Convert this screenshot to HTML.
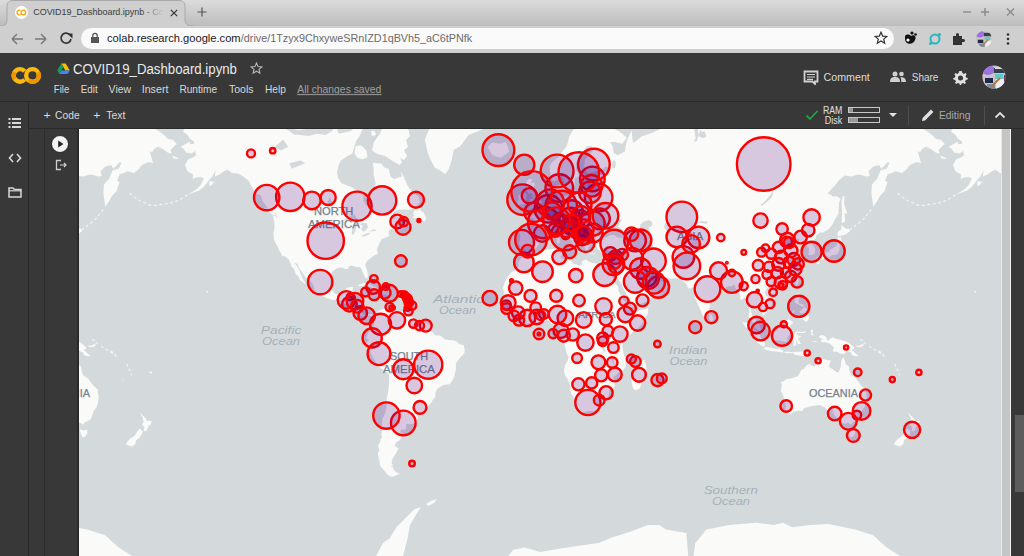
<!DOCTYPE html>
<html><head><meta charset="utf-8">
<style>
*{margin:0;padding:0;box-sizing:border-box}
html,body{width:1024px;height:556px;overflow:hidden;background:#383838;font-family:"Liberation Sans",sans-serif}
.abs{position:absolute}
#strip{left:0;top:0;width:1024px;height:26px;background:linear-gradient(#dcdcdc,#bcbcbc)}
#tab{left:0;top:0;width:200px;height:27px}
#toolbar{left:0;top:26px;width:1024px;height:27px;background:#cfcfcf}
#url{left:81px;top:28px;width:813px;height:21px;border-radius:11px;background:#fafafa}
.t{position:absolute;white-space:nowrap}
#hdr{left:0;top:53px;width:1024px;height:48px;background:#383838}
#hline{left:0;top:101px;width:1024px;height:1px;background:#282828}
#tb2{left:0;top:102px;width:1024px;height:26px;background:#383838}
#tline{left:28px;top:128px;width:996px;height:1px;background:#2a2a2a}
#side{left:0;top:102px;width:28px;height:454px;background:#383838}
#sline{left:28px;top:102px;width:1px;height:454px;background:#2a2a2a}
#cline{left:44px;top:129px;width:1px;height:427px;background:#2c2c2c}
#map{left:79px;top:129px;width:922px;height:427px;overflow:hidden;background:#d4dadc}
#rstrip{left:1001px;top:129px;width:10px;height:427px;background:#c5c5c5}
#rline{left:1010px;top:129px;width:1px;height:427px;background:#f0f0f0}
#thumb{left:1015px;top:415px;width:9px;height:77px;background:#5c5c5c}
.w{color:#e8eaed}
</style></head><body>
<div id="strip" class="abs"></div>
<svg class="abs" style="left:0;top:0" width="200" height="27">
 <path d="M0,26 C6,26 7,24 7,18 L7,7 C7,2 9,0.5 14,0.5 L178,0.5 C183,0.5 185,2 185,7 L185,18 C185,24 187,26 193,26" fill="#cfcfcf" stroke="#a8a8a8" stroke-width="1"/>
</svg>
<div class="abs" style="left:15px;top:6px;width:13px;height:13px;border-radius:50%;background:#fff"></div>
<svg class="abs" style="left:15px;top:6px" width="13" height="13"><path d="M5.6,4.4A2.4,2.4 0 1 0 5.6,8.6" fill="none" stroke="#f5a000" stroke-width="1.3"/><circle cx="8.4" cy="6.5" r="2.3" fill="none" stroke="#f5a000" stroke-width="1.3"/></svg>
<svg class="abs" style="left:169px;top:8px" width="10" height="10"><path d="M1.8,1.8L8.2,8.2M8.2,1.8L1.8,8.2" stroke="#333" stroke-width="1.2"/></svg>
<svg class="abs" style="left:196px;top:6px" width="12" height="12"><path d="M6,1.5V10.5M1.5,6H10.5" stroke="#555" stroke-width="1.2"/></svg>
<svg class="abs" style="left:960px;top:6px" width="64" height="12"><path d="M3,6H11" stroke="#8a8a8a" stroke-width="1.4"/><path d="M25,2V10M21,6H29" stroke="#8a8a8a" stroke-width="1.4"/><path d="M47,2.5L54,9.5M54,2.5L47,9.5" stroke="#8a8a8a" stroke-width="1.4"/></svg>
<div id="toolbar" class="abs"></div>
<svg class="abs" style="left:8px;top:31px" width="70" height="16">
 <path d="M4,8H15M4,8L9,3M4,8L9,13" stroke="#7a7a7a" stroke-width="1.5" fill="none"/>
 <path d="M27,8H38M38,8L33,3M38,8L33,13" stroke="#7a7a7a" stroke-width="1.5" fill="none"/>
 <path d="M61.5,3.5A5,5 0 1 0 63,8" stroke="#333" stroke-width="1.7" fill="none"/><path d="M59,2.5L64.5,2.5L64.5,7.5Z" fill="#333"/>
</svg>
<div id="url" class="abs"></div>
<svg class="abs" style="left:90px;top:32px" width="10" height="12"><rect x="1" y="5" width="8" height="6" fill="#555"/><path d="M2.8,5V3.5A2.2,2.2 0 0 1 7.2,3.5V5" stroke="#555" stroke-width="1.3" fill="none"/></svg>
<svg class="abs" style="left:874px;top:31px" width="14" height="14"><path d="M7,1.2L8.7,5.1L12.8,5.4L9.7,8.1L10.7,12.2L7,10L3.3,12.2L4.3,8.1L1.2,5.4L5.3,5.1Z" fill="none" stroke="#333" stroke-width="1.2"/></svg>
<svg class="abs" style="left:902px;top:30px" width="120" height="18">
 <path d="M3,7C3,4 7,4 9,6C12,4 15,7 13,10C12,14 6,15 4,12C3,11 3,9 3,7Z" fill="#111"/><circle cx="10" cy="3" r="1.6" fill="#111"/><circle cx="13.5" cy="4.5" r="1.3" fill="#111"/><circle cx="6" cy="10" r="1.6" fill="#fff"/>
 <circle cx="33" cy="9" r="4.5" fill="none" stroke="#2bb5c0" stroke-width="2"/><circle cx="37.5" cy="4.5" r="1.5" fill="#2bb5c0"/><circle cx="28.5" cy="13.5" r="1.5" fill="#2bb5c0"/>
 <path d="M51,6H54V4.5A1.5,1.5 0 0 1 57,4.5V6H60V9H61.5A1.5,1.5 0 0 1 61.5,12H60V15H51Z" fill="#333"/>
 <defs><clipPath id="av2"><circle cx="13" cy="12" r="11.6"/></clipPath></defs><g transform="translate(82,9) scale(0.69) translate(-13,-12)" clip-path="url(#av2)"><rect width="26" height="26" fill="#cdc3c6"/><ellipse cx="7" cy="5" rx="7" ry="5" fill="#9b72e0"/><rect x="4" y="13" width="8" height="5" fill="#1d2b48"/><rect x="6" y="19" width="8" height="7" fill="#7090a8"/><rect x="15" y="14" width="9" height="12" fill="#eeeeee"/><rect x="13" y="3" width="11" height="5" fill="#33404e"/><rect x="14" y="9" width="8" height="5" fill="#5fc9c8"/><path d="M9,23L19,13" stroke="#b07a4a" stroke-width="2"/></g>
 <circle cx="106" cy="4.5" r="1.3" fill="#333"/><circle cx="106" cy="9" r="1.3" fill="#333"/><circle cx="106" cy="13.5" r="1.3" fill="#333"/>
</svg>
<div id="hdr" class="abs"></div>
<svg class="abs" style="left:0;top:52px" width="50" height="50"><path d="M24.68,19.18 A6.30,6.30 0 1 0 24.68,27.62" stroke="#fbb912" stroke-width="4.4" fill="none"/><path d="M14.66,20.06 A6.30,6.30 0 0 0 14.84,27.01" stroke="#f09400" stroke-width="4.4" fill="none"/><circle cx="32.5" cy="23.4" r="6.3" stroke="#fbb912" stroke-width="4.4" fill="none"/><path d="M37.84,20.06 A6.30,6.30 0 0 1 28.62,28.36" stroke="#f09400" stroke-width="4.4" fill="none"/></svg>
<svg class="abs" style="left:57px;top:63px" width="13" height="11"><path d="M4.3,0.5H8.7L12.8,7.5H8.4Z" fill="#fbbc04"/><path d="M4.3,0.5L0.2,7.5L2.4,11L6.5,4Z" fill="#0f9d58"/><path d="M2.4,11H10.6L12.8,7.5H4.6Z" fill="#4285f4"/></svg>
<svg class="abs" style="left:250px;top:62px" width="13" height="13"><path d="M6.5,1L8,4.6L11.9,4.9L9,7.4L9.9,11.2L6.5,9.2L3.1,11.2L4,7.4L1.1,4.9L5,4.6Z" fill="none" stroke="#b8b8b8" stroke-width="1.1"/></svg>
<svg class="abs" style="left:803px;top:70px" width="16" height="15"><path d="M1.5,1.5H14.5V11.5H12V14L9.5,11.5H1.5Z" fill="none" stroke="#d0d0d0" stroke-width="1.8"/><path d="M4,4.5H12M4,7H12M4,9.3H10" stroke="#d0d0d0" stroke-width="1.2"/></svg>
<svg class="abs" style="left:890px;top:71px" width="16" height="12"><circle cx="5" cy="3" r="2.5" fill="#d0d0d0"/><circle cx="11.5" cy="3" r="2.3" fill="#d0d0d0"/><path d="M0,11C0,7 2,6 5,6C8,6 10,7 10,11Z" fill="#d0d0d0"/><path d="M10.5,6.2C13.5,6 16,7 16,11H11.3C11.3,9 11,7.5 10.5,6.2Z" fill="#d0d0d0"/></svg>
<svg class="abs" style="left:953px;top:70px" width="15" height="15"><path d="M7.5,1L9,1.3L9.3,3.1L10.8,3.9L12.4,2.9L13.6,4.3L12.6,5.9L13,7.5L14.8,8L14.6,9.5L12.8,9.9L12.1,11.4L13,13L11.7,14.1L10.2,13.1L8.6,13.6L8.2,15H6.8L6.4,13.6L4.8,13.1L3.3,14.1L2,13L2.9,11.4L2.2,9.9L0.4,9.5L0.2,8L2,7.5L2.4,5.9L1.4,4.3L2.6,2.9L4.2,3.9L5.7,3.1L6,1.3Z" fill="#e0e0e0"/><circle cx="7.5" cy="8" r="2.5" fill="#383838"/></svg>
<svg class="abs" style="left:981px;top:65px" width="26" height="26"><defs><clipPath id="av"><circle cx="13" cy="12" r="11.6"/></clipPath></defs><g clip-path="url(#av)"><rect width="26" height="26" fill="#cdc3c6"/><ellipse cx="7" cy="5" rx="7" ry="5" fill="#9b72e0"/><rect x="4" y="13" width="8" height="5" fill="#1d2b48"/><rect x="6" y="19" width="8" height="7" fill="#7090a8"/><rect x="15" y="14" width="9" height="12" fill="#eeeeee"/><rect x="13" y="3" width="11" height="5" fill="#33404e"/><rect x="14" y="2.5" width="9" height="1.5" fill="#e0e0e0"/><rect x="14" y="9" width="8" height="5" fill="#5fc9c8"/><path d="M9,23L19,13" stroke="#b07a4a" stroke-width="2"/><rect x="23" y="10" width="3" height="8" fill="#6a3050"/></g></svg>
<div id="hline" class="abs"></div>
<div id="tb2" class="abs"></div>
<svg class="abs" style="left:805px;top:109px" width="14" height="12"><path d="M1.5,6.5L5,10L12.5,2" stroke="#1ea446" stroke-width="1.8" fill="none"/></svg>
<div class="abs" style="left:848px;top:107px;width:32px;height:6px;border:1px solid #c8c8c8;background:#383838"><div style="width:4px;height:4px;background:#999"></div></div>
<div class="abs" style="left:848px;top:117px;width:32px;height:6px;border:1px solid #c8c8c8;background:#383838"><div style="width:9px;height:4px;background:#999"></div></div>
<svg class="abs" style="left:888px;top:112px" width="10" height="6"><path d="M1,1H9L5,5Z" fill="#e0e0e0"/></svg>
<div class="abs" style="left:908px;top:106px;width:1px;height:19px;background:#4e4e4e"></div>
<svg class="abs" style="left:921px;top:108px" width="14" height="14"><path d="M1,13L1.6,10L10,1.6L12.4,4L4,12.4Z" fill="#e0e0e0"/></svg>
<div class="abs" style="left:984px;top:106px;width:1px;height:19px;background:#4e4e4e"></div>
<svg class="abs" style="left:994px;top:111px" width="12" height="8"><path d="M1.5,6.5L6,2L10.5,6.5" stroke="#e0e0e0" stroke-width="1.8" fill="none"/></svg>
<div id="side" class="abs"></div>
<svg class="abs" style="left:8px;top:117px" width="14" height="12"><g fill="#d8d8d8"><rect x="0.5" y="1" width="2" height="2"/><rect x="4" y="1" width="9" height="2"/><rect x="0.5" y="5" width="2" height="2"/><rect x="4" y="5" width="9" height="2"/><rect x="0.5" y="9" width="2" height="2"/><rect x="4" y="9" width="9" height="2"/></g></svg>
<svg class="abs" style="left:8px;top:152px" width="14" height="12"><path d="M5,2L1.5,6L5,10M9,2L12.5,6L9,10" stroke="#d8d8d8" stroke-width="1.6" fill="none"/></svg>
<svg class="abs" style="left:8px;top:186px" width="14" height="12"><path d="M1,2H5L6.5,3.5H13V11H1Z" fill="none" stroke="#d8d8d8" stroke-width="1.5"/><path d="M1,4.8H13" stroke="#d8d8d8" stroke-width="1.2"/></svg>
<div id="sline" class="abs"></div>
<div id="tline" class="abs"></div>
<div id="cline" class="abs"></div>
<div class="abs" style="left:51px;top:135px;width:18px;height:18px;border-radius:50%;background:#f4f4f4;border:1px solid #2a2a2a"></div>
<svg class="abs" style="left:52px;top:136px" width="16" height="16"><path d="M6.2,4.6L11.4,8L6.2,11.4Z" fill="#222"/></svg>
<svg class="abs" style="left:55px;top:159px" width="13" height="12"><path d="M6,1.5H1.5V10.5H6" stroke="#cfcfcf" stroke-width="1.3" fill="none"/><path d="M5,6H11M9,4L11,6L9,8" stroke="#cfcfcf" stroke-width="1.2" fill="none"/></svg>
<div class="abs" style="left:77px;top:129px;width:2px;height:427px;background:#2a2a2a"></div>
<div id="map" class="abs">
<svg width="922" height="427" viewBox="79 129 922 427" style="display:block">
 <defs><g id="world"><path d="M180.6,94.2 184.4,128.6 183.2,131.8 188.1,135.5 189.8,138.8 193.4,141.0 194.5,143.7 189.8,144.2 190.0,141.5 185.9,143.7 180.4,146.8 183.8,148.9 186.1,152.4 191.7,153.4 195.1,150.9 196.0,155.3 193.4,157.2 188.1,159.6 184.9,165.1 187.0,170.4 190.2,173.0 192.8,173.9 193.0,178.9 196.6,177.2 200.9,177.2 204.1,178.5 200.4,185.3 196.6,189.2 191.7,192.2 187.4,194.8 193.4,192.5 198.7,190.7 204.1,186.8 206.2,183.7 210.0,178.9 212.6,176.0 215.4,170.0 214.9,176.4 219.0,174.7 224.3,171.3 227.5,169.6 231.8,173.0 238.2,173.5 241.0,175.1 245.7,178.5 248.9,181.3 251.0,185.3 254.2,191.0 257.4,194.0 261.0,195.5 262.7,201.2 265.9,205.4 267.6,208.1 271.1,210.5 276.2,213.7 276.6,216.0 277.7,219.2 276.0,216.6 273.0,216.0 274.3,222.3 274.3,229.3 273.4,232.8 274.0,239.4 274.9,242.1 277.7,246.8 278.9,250.0 280.9,252.9 281.7,255.5 284.7,256.5 286.4,257.3 289.0,260.1 290.5,263.1 291.5,266.4 293.7,268.6 295.2,271.7 295.6,273.7 299.0,277.0 299.6,279.4 303.3,282.4 304.5,283.8 305.6,282.9 303.5,280.5 301.8,276.8 299.4,270.5 296.9,265.9 294.1,262.6 297.5,263.9 299.0,268.1 302.2,272.2 305.8,277.7 308.6,278.9 312.0,283.1 313.9,286.3 314.4,289.8 316.5,292.7 319.3,294.5 322.5,296.3 325.9,297.6 329.9,299.2 334.2,300.1 337.0,299.0 340.6,300.5 342.7,302.7 345.9,304.1 349.1,305.1 351.9,305.6 353.0,307.1 355.5,310.0 356.2,310.8 356.0,312.6 358.3,313.4 360.4,315.8 362.4,316.4 365.1,317.7 367.9,318.4 367.5,316.2 369.4,315.2 371.5,316.2 372.8,318.6 373.9,315.6 373.7,314.9 371.5,313.9 368.5,313.9 365.8,315.2 363.6,314.3 360.7,311.5 360.4,309.3 360.9,306.9 361.3,303.4 361.5,301.6 358.7,299.6 355.5,299.6 352.3,299.9 350.8,300.1 350.6,296.1 351.7,293.8 352.5,289.8 353.4,287.0 350.8,287.0 346.4,287.9 345.9,290.9 343.8,293.8 340.6,294.1 337.4,294.5 334.8,293.4 333.1,291.3 331.6,288.8 330.6,285.9 330.4,281.2 331.0,277.0 331.4,272.9 333.1,270.8 336.8,268.6 339.5,267.6 342.7,267.8 345.9,269.1 348.7,269.1 348.3,266.9 351.3,265.6 353.4,266.1 356.6,267.1 359.2,266.9 361.3,268.6 362.6,272.2 364.5,276.3 366.2,278.4 367.5,278.4 368.1,275.3 367.1,270.5 365.3,265.6 365.8,262.9 367.3,261.1 370.5,258.3 373.0,256.3 375.8,254.7 377.9,253.7 377.1,249.7 376.2,246.5 377.1,248.7 378.6,245.2 379.0,244.1 380.1,242.4 381.1,239.4 382.2,238.8 385.4,237.9 387.5,236.5 389.7,236.0 388.4,233.4 389.2,230.1 392.9,228.4 396.1,226.9 397.8,227.8 399.3,230.7 402.5,227.5 407.8,225.7 411.0,223.8 409.9,220.1 408.0,223.2 404.6,224.1 401.2,222.3 400.3,218.6 402.0,214.4 399.3,213.1 396.1,213.4 391.8,216.3 393.9,212.1 398.2,209.8 404.6,209.5 411.0,209.8 417.0,205.7 420.0,201.9 418.5,196.6 414.2,193.7 410.6,189.9 407.4,185.3 405.7,181.3 401.4,171.7 397.1,177.2 393.9,179.3 390.5,176.4 388.6,168.7 384.3,167.4 381.1,163.3 372.6,162.4 373.7,168.7 373.7,175.1 375.6,182.9 374.7,189.2 370.7,194.8 370.5,201.9 369.4,205.4 366.8,206.1 363.4,200.5 363.4,192.9 357.7,191.8 351.3,186.1 345.9,184.5 341.7,183.3 338.0,178.1 337.2,170.9 339.5,165.1 344.9,160.1 346.4,156.8 352.3,153.4 355.1,143.7 357.7,142.1 365.1,138.3 365.8,130.3 364.1,125.0 357.7,123.1 351.3,130.9 347.0,132.1 338.5,133.8 336.3,125.0 332.1,130.9 325.7,134.9 317.1,133.8 308.6,136.1 300.1,134.9 293.7,134.4 289.4,130.9 280.9,126.2 274.5,123.1 265.9,123.7 257.4,125.0 251.0,128.0 240.3,124.3 219.0,119.4 206.2,113.5 193.4,118.7 180.6,94.2ZM383.3,108.8 421.7,118.7 423.8,126.2 430.2,126.8 424.9,139.4 425.9,144.7 428.1,153.8 431.3,161.0 434.9,167.8 438.7,169.6 445.1,173.9 448.3,170.0 451.5,161.0 453.7,149.9 460.1,146.3 468.6,134.9 485.7,128.0 492.1,115.5 496.3,86.2ZM412.3,218.2 414.2,215.4 413.1,213.1 416.3,207.8 420.4,205.1 420.6,210.8 423.8,212.4 424.9,215.4 426.4,218.2 424.7,221.4 421.7,220.1 418.5,218.2ZM287.3,126.8 297.9,130.3 312.9,128.0 323.5,125.0 332.1,123.1 334.2,108.8 283.0,108.8ZM155.0,148.3 158.2,146.8 163.5,149.4 166.9,151.9 169.9,153.4 171.6,152.9 170.4,149.9 173.6,146.8 175.1,145.2 177.0,144.2 173.1,139.9 167.8,138.8 164.6,135.5 159.3,131.5 155.0,128.6 155.0,108.8ZM172.5,155.8 179.1,158.2 176.8,159.1 173.1,158.2ZM209.4,181.3 214.3,181.7 211.5,185.3 209.2,186.1ZM265.1,207.8 272.3,209.8 276.0,215.7 272.8,215.0 268.7,211.8ZM357.7,286.1 359.8,284.3 364.1,283.1 368.3,283.3 373.7,286.3 377.9,288.2 380.7,290.0 374.3,290.7 373.7,288.8 368.3,286.3 364.5,285.4 361.3,286.3ZM380.1,294.1 383.7,290.7 389.7,291.1 393.3,293.6 387.1,295.8 384.3,294.5ZM372.0,294.3 376.4,295.0 374.3,295.6ZM395.6,293.8 399.1,294.1 398.6,295.0 395.6,295.0ZM373.0,274.4 374.7,275.3 374.1,278.9 372.6,278.2ZM373.9,315.6 376.4,314.1 377.9,311.7 379.4,310.4 380.7,309.7 383.7,309.1 385.6,307.3 386.9,308.6 385.6,310.0 386.3,310.8 387.5,310.0 389.2,309.5 389.7,308.0 391.2,309.3 393.5,311.5 396.1,311.3 400.3,312.3 402.5,311.3 406.3,311.0 407.2,312.1 409.3,315.8 411.4,316.2 414.8,319.5 417.0,321.2 421.7,321.4 424.9,322.0 427.4,323.5 429.8,325.2 431.1,329.7 432.3,331.9 433.8,334.2 436.0,335.7 438.7,335.3 441.9,336.8 444.5,339.3 448.3,340.0 451.5,340.2 454.7,340.4 456.9,341.9 459.6,344.3 463.3,344.9 463.9,346.0 464.8,350.0 464.3,353.3 462.8,354.8 460.1,357.6 457.3,361.5 455.8,363.3 456.0,368.6 455.2,372.6 454.1,376.7 452.6,379.8 451.5,382.1 449.4,384.2 446.8,384.4 443.6,385.1 440.2,386.8 437.0,389.1 435.5,392.7 435.3,396.7 433.0,399.4 430.6,403.6 427.9,406.4 425.9,409.2 424.9,410.7 421.9,413.5 419.1,413.5 416.3,412.2 414.4,412.0 416.5,415.1 418.0,417.5 416.3,421.8 413.1,423.7 408.9,424.2 406.1,423.9 406.3,427.8 404.8,430.1 401.4,429.5 400.3,431.8 402.5,433.8 403.3,435.2 401.6,435.5 399.9,440.2 397.1,441.7 395.0,444.5 395.0,446.3 398.6,448.5 396.1,453.0 394.4,455.9 392.4,458.9 391.6,462.9 393.1,465.4 389.7,466.4 392.7,466.8 393.3,468.9 395.0,471.4 399.9,474.0 396.9,475.1 393.7,476.6 390.7,476.6 387.1,474.3 383.7,470.0 380.1,465.7 379.4,460.9 377.9,453.3 379.4,450.1 377.9,446.3 379.9,442.3 381.1,438.7 382.2,437.0 381.1,434.6 382.0,432.3 381.3,427.8 382.2,423.1 382.2,419.6 384.1,415.4 385.6,411.2 386.5,407.4 386.5,402.4 386.9,397.5 388.2,391.5 388.8,385.8 389.2,379.8 389.0,373.9 386.7,372.2 383.3,369.7 379.0,367.0 376.4,363.9 374.5,359.8 372.2,355.9 370.5,351.6 368.5,348.5 366.0,346.6 365.8,343.8 367.7,341.3 368.8,339.5 366.4,338.7 367.5,335.1 368.3,332.3 370.5,330.4 371.5,328.7 373.7,325.9 374.1,322.2 373.7,319.7 372.8,318.6ZM526.4,252.1 527.9,251.8 530.5,253.7 534.3,253.9 536.4,252.4 539.2,251.8 542.2,250.3 545.4,249.5 549.7,249.5 552.9,248.9 556.1,249.2 559.9,248.1 562.5,248.7 561.4,250.5 561.6,252.6 562.7,253.7 561.4,255.8 560.3,257.0 562.7,258.8 565.7,259.9 567.2,259.6 571.4,261.1 572.7,263.4 576.3,264.6 579.3,266.1 581.9,264.4 581.7,261.6 583.4,260.4 585.9,259.6 588.7,261.4 592.3,262.9 596.6,263.6 600.9,264.6 603.0,263.6 605.3,262.9 607.9,263.6 612.0,263.6 613.5,268.1 612.2,272.2 610.5,270.5 608.5,267.1 607.9,268.1 610.7,273.7 612.2,277.0 614.7,281.5 615.2,283.8 617.7,285.9 618.4,288.2 618.4,291.3 620.5,294.5 621.3,295.8 622.8,299.6 623.7,300.5 626.9,302.7 629.5,305.6 631.4,307.1 631.4,308.6 630.3,309.3 633.9,311.7 636.1,311.0 640.3,310.0 644.2,309.5 648.2,308.4 648.0,311.3 648.0,313.6 646.3,315.8 644.6,319.5 641.4,324.4 638.2,328.0 635.6,329.7 632.9,331.7 629.9,335.1 627.5,337.8 624.8,340.0 623.3,343.6 622.2,345.8 622.8,348.5 623.1,351.1 623.9,355.4 625.4,357.6 625.6,364.2 626.0,366.2 623.3,370.1 617.9,372.8 616.2,375.1 613.2,377.1 614.7,382.1 614.7,386.8 609.4,390.1 609.2,391.9 608.3,397.5 605.8,399.9 603.4,404.1 599.8,407.4 597.0,409.9 593.8,411.2 589.3,411.0 587.0,411.2 581.7,413.3 580.0,412.5 578.3,411.5 577.8,408.6 577.0,405.4 574.2,397.7 571.4,393.9 570.8,391.5 569.9,384.2 567.8,379.6 565.0,375.3 564.0,370.8 565.0,365.0 568.0,359.8 568.4,357.0 566.7,353.3 565.2,347.0 565.0,346.4 564.2,344.3 561.8,341.5 559.3,338.9 557.8,335.7 558.8,333.6 559.3,330.8 559.9,327.6 558.0,325.5 557.1,324.2 555.0,324.6 551.8,324.8 550.1,322.2 548.6,320.5 545.4,320.3 542.2,320.7 539.0,321.8 536.2,323.1 534.7,323.7 532.6,323.1 529.4,322.9 526.2,323.7 523.0,324.6 520.9,324.0 518.7,322.2 516.0,320.5 514.5,319.2 512.3,318.0 510.8,315.8 510.2,313.9 508.1,312.1 506.6,310.4 504.4,308.6 503.2,307.1 503.2,304.9 501.7,302.3 503.2,300.5 503.8,298.3 504.4,295.0 504.4,292.0 502.7,288.6 503.8,285.2 504.9,281.9 506.4,279.4 508.1,276.3 510.6,273.2 511.5,272.0 514.5,271.0 517.2,268.8 518.5,265.9 518.1,263.1 519.4,260.4 521.3,258.3 522.8,257.8 524.5,256.8 525.8,253.7ZM644.2,359.8 646.1,365.3 646.5,367.9 644.8,371.3 644.0,374.8 641.8,381.7 640.3,387.7 639.3,389.1 635.4,390.3 632.9,387.9 632.0,384.4 631.4,381.0 633.7,377.1 632.9,370.8 633.7,369.0 638.2,367.9 640.3,365.7 641.4,363.1 643.1,360.7ZM527.1,251.6 529.6,249.7 534.3,249.7 536.9,247.3 537.9,245.4 539.4,244.3 538.4,242.1 540.7,238.8 543.7,236.8 545.8,235.4 545.6,232.2 547.3,230.7 550.5,231.3 552.9,231.9 554.6,230.1 558.0,228.1 559.9,229.0 561.0,230.7 562.5,233.9 565.0,235.7 567.4,237.4 569.3,238.5 571.0,240.2 572.5,241.9 573.1,244.1 572.3,246.2 573.3,246.5 574.4,245.2 574.4,243.8 575.5,243.2 574.4,241.9 575.7,239.6 577.4,240.7 578.5,241.3 578.5,240.5 577.2,239.1 575.1,237.7 572.9,236.5 573.6,235.4 571.0,235.1 569.3,233.7 567.8,230.4 565.9,229.0 565.2,225.1 566.7,224.1 568.4,224.4 568.0,226.3 568.9,226.6 569.7,225.4 571.4,229.0 574.0,230.7 576.3,232.2 577.6,233.4 579.5,235.1 580.6,237.1 580.4,239.6 581.7,241.9 582.9,243.5 584.0,245.4 585.1,248.9 586.8,250.5 588.1,250.3 588.1,247.6 589.6,246.5 590.2,245.4 587.2,242.7 587.9,239.1 589.8,240.2 590.8,239.4 592.3,238.2 594.5,238.5 595.1,239.6 597.7,239.9 600.9,237.9 601.5,239.6 596.2,239.9 594.9,242.1 596.2,244.6 595.1,245.7 597.0,246.5 597.5,248.9 598.7,250.0 601.9,251.1 604.5,249.5 607.3,250.3 609.0,251.3 611.5,250.8 613.0,249.5 615.8,249.5 616.2,250.3 615.4,252.1 615.6,253.7 614.7,257.0 613.9,259.4 613.2,261.6 612.0,263.6 613.5,268.1 614.7,271.7 617.1,277.0 619.0,280.8 621.1,282.9 622.6,287.0 624.5,290.4 626.9,295.0 629.7,297.4 630.1,300.1 630.5,302.1 631.4,304.9 631.6,306.7 633.9,306.9 635.0,306.5 637.1,305.4 641.4,303.8 643.7,302.7 646.7,301.6 650.4,300.3 651.0,298.3 654.2,297.2 657.0,296.5 658.5,295.2 662.1,292.9 662.3,290.0 663.8,289.5 666.6,284.7 664.0,282.2 661.7,281.5 660.0,280.3 659.1,276.1 658.5,276.3 657.4,277.7 657.0,278.4 655.3,280.3 652.7,281.0 649.9,281.5 649.1,280.5 648.9,277.7 648.2,276.3 647.4,277.9 647.4,279.4 645.9,275.6 644.6,274.1 642.5,270.5 641.4,268.3 641.0,266.9 642.7,267.1 644.6,266.9 646.3,268.6 647.4,269.6 648.9,272.2 651.2,273.4 654.2,274.9 657.4,274.9 659.1,273.7 661.2,277.0 664.7,277.7 668.3,278.2 671.9,278.7 675.5,278.2 680.9,277.9 681.9,279.4 683.0,281.5 685.6,282.9 686.6,285.2 688.3,288.2 690.5,288.6 693.2,287.0 693.9,285.4 694.1,287.9 694.5,290.4 694.3,292.7 694.7,296.1 695.8,299.4 696.4,300.7 697.9,304.3 698.6,306.2 700.1,309.3 701.6,312.6 702.4,314.9 704.3,316.7 705.8,314.9 707.5,314.1 708.2,311.9 709.5,311.7 709.2,308.6 710.3,305.8 709.9,301.6 710.3,299.9 711.8,299.9 714.6,298.1 716.7,295.6 719.9,292.3 723.5,290.4 724.6,288.6 726.9,286.8 728.9,286.3 732.1,285.9 734.2,284.5 734.8,285.2 735.3,287.2 736.1,288.8 738.5,291.6 740.2,295.0 740.2,299.2 741.7,299.9 744.2,297.6 747.0,298.3 747.4,301.6 748.7,305.4 749.3,308.2 749.3,312.6 748.7,315.8 748.7,317.3 751.3,320.1 753.0,322.5 753.8,325.7 755.1,328.0 757.0,329.3 759.8,331.2 761.3,331.0 759.6,325.9 759.4,323.3 757.2,321.0 755.1,319.2 753.6,318.6 752.1,314.3 750.6,311.3 751.5,308.2 752.3,305.1 754.3,305.1 754.3,306.7 757.7,308.2 758.7,309.3 759.8,311.3 761.9,311.7 762.6,315.6 763.4,315.2 766.2,313.0 767.5,311.7 770.7,310.0 772.0,307.8 772.2,304.3 771.1,300.7 769.8,299.2 767.3,296.7 765.8,294.3 764.5,292.7 766.4,289.8 766.6,288.6 768.3,287.2 770.5,286.8 772.8,287.0 774.3,289.8 774.7,287.7 776.9,286.8 780.1,285.4 782.6,285.2 785.4,284.3 788.0,282.6 790.9,280.1 793.9,277.7 794.6,275.3 796.1,271.7 798.2,270.0 799.1,267.1 797.1,265.4 799.1,264.4 797.1,261.1 795.6,256.3 793.5,254.7 795.6,251.6 798.2,249.5 800.3,247.9 797.1,247.1 793.9,248.4 792.9,248.4 791.8,245.7 789.9,243.8 791.8,243.2 794.1,241.0 797.1,238.5 799.7,239.4 797.3,243.5 798.4,243.8 800.1,241.9 802.7,241.3 804.2,241.3 805.9,242.4 805.0,246.0 807.4,246.8 809.1,247.9 808.9,251.1 808.4,254.7 811.0,255.2 814.2,253.9 815.1,251.8 815.3,249.5 814.2,247.1 812.7,244.6 811.0,243.0 813.1,240.7 815.7,238.2 815.9,235.7 817.8,234.2 820.4,231.9 822.7,232.8 828.1,229.6 832.3,225.1 834.5,220.1 838.3,214.1 838.7,208.8 839.2,201.9 840.7,199.1 836.6,196.2 832.3,196.6 830.8,194.4 827.4,194.0 832.3,188.0 834.5,186.1 838.7,180.5 844.5,175.6 851.5,176.4 856.9,174.7 860.7,174.7 865.8,176.4 869.7,176.0 868.6,170.9 873.5,166.5 879.3,165.1 881.4,168.7 887.8,161.9 889.5,162.9 886.7,168.7 880.5,170.4 877.1,178.9 873.9,182.1 871.8,185.3 871.4,192.9 873.3,206.8 877.1,200.9 880.3,195.5 884.6,191.0 885.7,187.6 887.4,182.5 885.0,180.5 887.8,173.9 892.1,173.0 895.3,171.3 902.3,173.0 907.0,168.7 910.2,164.7 916.6,161.9 921.1,162.9 919.8,158.7 917.7,151.4 920.2,151.9 923.0,148.3 923.0,108.8 837.7,86.2 752.3,58.6 667.0,86.2 662.7,128.0 656.3,130.9 653.1,132.6 641.4,136.6 637.6,139.9 632.9,143.1 631.6,130.3 626.5,141.5 624.8,151.4 617.9,155.3 613.7,152.9 612.6,145.8 610.0,142.1 614.7,142.1 622.2,143.7 626.9,137.7 620.1,132.1 609.4,126.2 603.0,121.9 594.5,108.8 585.9,115.5 579.5,123.1 573.1,130.3 569.5,136.1 567.2,144.7 564.6,148.9 561.4,152.4 558.2,157.2 555.0,159.6 551.4,162.9 549.7,166.5 549.9,171.3 550.9,177.2 551.8,180.5 553.9,181.3 556.1,180.9 559.5,177.2 561.6,173.5 562.5,177.2 564.4,182.5 566.1,189.2 566.7,190.7 569.5,190.7 570.4,188.8 574.0,186.8 574.6,182.1 574.8,178.9 579.3,176.0 577.4,171.7 575.7,170.0 575.9,162.4 578.5,159.6 582.3,155.8 586.1,146.8 591.3,145.8 593.2,149.9 591.3,152.4 584.9,159.6 584.4,166.5 586.4,171.3 588.1,173.5 592.3,172.2 596.2,171.3 600.2,170.0 603.4,173.5 598.7,175.1 594.5,175.1 591.7,175.6 589.1,176.8 589.3,180.1 591.1,180.1 590.8,184.5 588.3,185.3 587.2,182.5 584.9,184.5 583.8,187.2 584.0,190.3 582.9,193.7 580.6,195.1 578.7,195.1 578.0,193.7 573.1,195.5 569.5,197.0 567.8,194.8 564.8,195.9 562.3,196.6 560.8,195.1 560.1,192.2 561.6,189.9 561.0,187.2 561.6,182.5 559.3,184.9 556.5,186.1 556.3,191.0 557.6,194.8 557.6,197.0 556.3,198.4 553.9,198.4 551.8,198.8 549.2,200.2 548.8,201.9 547.5,204.0 546.3,205.7 544.1,206.8 542.4,207.8 542.0,210.1 539.4,211.5 536.4,212.4 534.9,211.5 535.6,214.7 532.6,214.4 529.2,215.0 528.8,217.0 530.0,217.6 533.2,218.6 534.3,219.5 536.4,222.6 536.4,227.2 535.8,230.7 534.7,231.3 532.6,231.0 530.9,230.7 526.8,230.4 522.1,229.9 521.1,231.0 519.2,232.5 520.2,234.5 520.4,237.4 519.8,240.2 518.7,244.1 520.2,245.4 520.0,248.7 519.8,248.9 523.2,248.4 525.6,250.0 526.2,251.3ZM526.8,210.1 530.5,209.1 532.6,208.1 536.9,207.8 542.0,206.4 541.1,204.4 542.6,201.2 539.6,200.2 539.0,198.0 537.9,195.1 536.4,193.3 535.6,190.7 533.7,188.8 534.9,183.3 532.6,182.5 530.5,182.9 532.4,178.9 528.3,178.9 526.0,183.3 527.3,187.2 526.6,191.4 529.2,192.9 528.3,194.0 532.0,193.3 532.6,196.6 532.8,199.1 529.2,199.1 530.0,202.6 527.9,204.4 532.2,205.7 529.4,206.8ZM525.8,198.8 526.2,203.3 523.0,203.7 518.7,205.1 517.2,203.0 518.9,198.4 517.7,196.2 520.9,193.7 523.6,191.8 527.1,194.4ZM492.1,154.8 487.8,147.3 492.1,142.6 500.6,143.7 505.9,142.1 508.1,147.3 509.1,151.9 500.6,157.7 495.3,156.3ZM565.5,246.2 572.3,245.4 571.2,249.7 569.5,248.9 565.9,247.3ZM556.9,238.5 559.7,237.7 559.7,243.0 557.3,243.8 556.9,241.3ZM557.3,233.9 559.1,232.2 559.3,234.8 558.6,236.8 557.6,235.4ZM589.1,253.4 595.1,253.4 594.7,254.2 591.3,254.2 589.1,253.7ZM607.9,254.2 612.8,252.6 611.5,254.5 609.4,255.2 608.1,255.0ZM709.5,313.0 712.4,315.8 713.7,318.4 712.4,320.7 710.3,321.2 709.2,319.0 709.5,315.8ZM818.3,257.0 821.7,253.2 825.9,252.6 829.1,251.8 831.1,248.7 834.5,247.3 837.0,244.6 837.7,240.2 837.5,237.7 840.7,236.8 841.7,242.1 839.8,245.4 839.6,249.2 838.7,252.6 837.2,253.7 835.1,255.0 831.9,255.0 830.8,256.0 828.7,258.1 827.4,255.8 823.8,255.8 820.6,256.8 818.5,256.5ZM815.9,258.1 818.5,257.0 820.6,259.4 819.1,263.4 817.0,263.9 815.9,260.1ZM821.7,257.0 825.3,256.3 826.4,257.3 823.8,258.6 821.9,259.9ZM837.7,236.5 839.8,235.7 844.5,235.1 850.0,231.3 849.0,228.4 845.8,228.7 841.3,225.1 841.3,229.6 838.5,231.3 837.5,233.4ZM841.9,223.2 845.1,221.7 844.5,213.1 847.3,213.7 844.1,203.7 844.5,195.9 842.8,195.9 841.5,201.9 842.1,213.1 841.7,218.6ZM795.2,283.6 796.9,285.9 799.1,280.1 798.2,278.2 796.5,279.8ZM770.7,292.3 772.6,294.5 774.9,294.1 775.8,291.1 774.1,290.2 772.0,290.4ZM794.6,299.0 796.3,293.8 799.7,293.8 800.3,297.2 798.4,299.9 799.3,303.6 803.5,304.3 804.0,306.9 800.3,305.4 796.5,303.4 795.0,302.3ZM799.3,319.0 802.5,317.3 805.7,314.7 808.2,314.1 808.9,318.6 806.7,322.0 804.0,320.5 802.5,318.8 799.5,319.2ZM799.3,311.5 801.4,310.4 804.6,307.1 807.4,309.3 805.7,312.6 802.5,313.6 800.1,313.0ZM789.0,316.0 793.9,309.7 794.6,311.5 789.7,316.4ZM742.3,322.0 747.0,322.9 753.0,328.7 756.6,331.2 760.4,336.1 761.9,339.3 765.1,341.5 764.7,346.4 761.9,346.0 757.2,342.5 754.0,338.3 750.4,333.6 749.1,330.2 744.9,326.1ZM763.4,348.5 766.2,346.8 770.5,347.7 774.7,348.8 779.4,348.8 783.3,350.7 782.8,352.6 775.8,351.6 769.4,350.7 765.1,349.6ZM784.3,352.2 786.9,351.6 792.9,352.2 801.4,351.6 806.1,352.2 809.9,352.0 805.7,354.4 803.5,355.9 795.0,355.0 792.9,353.1 786.5,353.3 784.3,352.8ZM771.5,330.8 773.2,329.7 775.8,330.4 780.1,327.2 782.2,324.2 785.4,322.5 788.6,319.0 793.5,322.7 790.7,324.8 790.1,327.0 790.9,331.9 789.7,334.0 787.5,337.2 787.5,341.0 785.4,342.1 783.3,341.5 780.1,340.8 777.5,340.4 774.1,340.2 773.7,337.2 771.5,335.1 771.5,332.9ZM793.5,346.0 795.9,345.8 796.1,339.8 797.8,344.0 801.0,344.0 797.8,338.3 801.8,336.1 798.2,335.7 796.1,332.9 804.6,332.9 806.1,330.8 803.5,331.9 796.1,331.4 794.4,334.0 792.9,338.7 793.7,341.5ZM811.0,330.2 812.1,329.3 813.1,331.4 812.1,332.9 813.8,335.7 811.2,335.1ZM812.1,340.8 818.0,341.5 815.3,342.1 812.7,341.5ZM818.5,336.8 821.7,334.9 825.5,335.9 827.6,341.0 832.3,337.2 836.6,338.9 839.8,339.5 847.3,342.1 850.5,344.3 853.7,346.8 854.3,348.5 851.7,350.3 853.7,351.6 855.6,353.5 859.0,356.1 855.8,356.3 852.6,355.4 850.5,352.2 846.6,350.5 845.1,353.3 843.0,353.9 839.8,353.5 836.6,351.6 833.4,352.0 833.0,349.4 834.5,347.9 830.4,344.0 825.9,342.3 824.0,342.1 822.3,342.5 820.6,340.0 823.8,339.3 820.6,338.3 818.9,337.2ZM855.4,345.8 859.0,345.8 862.2,344.3 863.9,343.2 863.3,345.8 860.1,347.3 856.9,346.8ZM781.1,382.1 782.5,381.7 786.5,379.2 791.8,378.2 797.1,376.4 799.9,373.0 801.2,369.7 803.5,369.3 806.7,365.3 809.9,363.7 812.5,366.4 815.3,365.9 816.8,362.4 818.5,360.2 821.9,358.9 820.4,358.0 824.9,359.6 828.1,360.2 830.8,360.2 830.2,362.6 828.9,366.4 832.3,369.0 836.2,371.9 838.7,372.2 840.9,366.4 841.3,360.9 843.0,357.0 845.1,360.9 845.6,364.2 849.0,366.4 849.4,370.4 851.1,375.3 856.2,378.7 859.0,382.6 861.1,385.6 865.6,389.6 866.7,397.5 865.8,403.6 864.3,407.4 861.8,410.7 860.7,413.8 859.0,419.1 855.4,421.2 852.6,422.6 851.1,424.8 847.9,422.6 845.1,423.9 840.9,422.6 837.2,419.9 836.8,417.7 834.5,415.4 833.6,412.2 832.3,414.1 833.0,409.2 829.8,412.5 828.5,413.5 827.0,409.9 824.9,407.4 819.5,404.9 814.2,405.4 808.2,406.9 803.5,408.6 802.7,411.0 798.2,410.7 793.9,411.7 790.7,414.1 787.5,413.8 784.3,412.0 785.6,409.4 785.8,405.6 784.3,401.1 784.1,398.7 782.2,392.7 780.9,391.9 781.8,385.6ZM847.5,429.2 851.1,430.3 855.4,429.8 855.2,433.5 853.2,436.7 850.5,437.3 848.8,433.5ZM907.4,412.2 911.3,415.9 914.0,418.5 914.5,420.7 919.8,420.9 918.5,425.0 916.4,426.1 914.5,430.9 911.7,431.2 912.3,427.0 909.8,425.0 911.5,421.8 910.8,417.7ZM907.4,428.6 910.6,430.9 910.0,433.8 907.6,437.6 904.2,440.2 903.2,444.2 900.0,446.6 894.2,444.8 895.3,441.7 898.0,438.7 902.7,435.8 904.9,432.3ZM888.9,378.0 893.1,381.4 895.5,382.8 891.0,380.3ZM917.2,371.9 920.0,371.5 919.6,373.5 917.2,373.0ZM206.4,290.7 208.3,291.3 206.8,292.9 206.2,292.0ZM370.0,560.0 376.1,556.0 382.9,543.0 389.6,538.5 396.4,527.3 405.4,518.3 414.4,509.3 421.1,507.0 416.6,513.8 409.9,525.0 407.6,538.5 403.1,556.0 403.0,560.0ZM426.0,504.0 431.0,501.0 437.0,499.0 434.0,503.0 428.0,506.0ZM505.0,560.0 513.4,549.8 524.7,547.5 540.0,552.0 567.0,547.5 598.5,543.0 612.0,537.6 630.0,531.8 648.0,525.0 659.3,525.0 666.0,529.5 686.3,533.1 688.6,560.0 693.0,560.0 695.3,543.0 706.6,529.5 729.0,525.0 756.0,522.8 774.1,525.0 783.1,522.8 792.1,527.3 810.1,525.0 828.1,524.1 855.1,529.5 873.1,535.3 886.6,547.5 900.1,556.0 902.0,560.0Z" fill="#fafaf8"/><path d="M693.7,142.1 695.8,138.3 694.3,130.9 695.8,125.0 693.7,115.5 694.7,105.3 699.0,105.3 700.1,121.9 697.9,130.9 699.0,136.6 703.3,138.3 706.5,136.6 704.3,130.9 702.2,132.1 700.1,129.7 696.9,141.0ZM602.8,169.6 605.1,166.5 609.2,167.8 608.3,170.9 605.1,172.6 603.4,171.7ZM612.6,168.7 615.4,167.4 615.8,161.9 613.7,160.1 612.2,162.4ZM598.5,235.1 598.7,230.1 600.2,228.4 602.4,225.4 604.5,221.7 606.2,221.4 608.5,223.5 610.5,226.3 610.5,227.8 612.6,227.8 615.8,226.3 614.1,224.8 613.2,222.6 614.5,222.3 619.0,219.8 622.6,219.5 620.5,222.0 619.2,224.4 617.7,226.6 621.1,228.7 624.8,231.0 627.7,236.2 627.5,237.7 623.5,237.9 620.1,237.9 616.9,237.1 614.1,235.1 610.0,235.1 605.6,237.7 601.3,237.4 598.9,236.5ZM643.5,221.7 648.9,220.1 652.1,221.7 652.3,225.7 648.4,227.8 651.0,233.7 653.8,238.5 652.1,242.4 653.8,248.1 649.3,249.7 645.7,247.9 644.0,245.4 644.6,240.2 646.3,239.9 643.5,236.2 640.3,232.5 639.9,227.8 640.3,224.4ZM664.9,223.2 669.8,222.6 670.2,228.4 666.1,230.7 664.0,226.9ZM760.4,204.7 764.1,202.3 770.5,194.8 773.2,190.3 772.0,197.3 766.2,202.6 761.9,205.7ZM695.8,222.9 701.1,221.1 708.0,221.7 706.5,223.8 699.0,222.6ZM607.3,334.6 611.3,333.4 611.7,334.9 610.5,339.3 607.3,339.1 606.4,336.6ZM601.3,341.0 603.6,345.8 605.6,352.2 604.3,352.4 602.1,348.5 601.1,343.6ZM611.5,354.4 613.2,358.7 614.3,364.8 613.0,363.1 611.7,359.4ZM342.5,220.8 348.1,217.0 354.5,214.7 358.1,220.1 355.5,221.7 350.2,219.5ZM351.7,234.5 352.3,227.8 354.9,223.8 358.1,223.8 356.4,226.9 354.9,232.2 353.6,234.8ZM358.7,223.5 366.2,222.9 368.3,226.9 364.7,231.3 363.0,231.6 361.1,229.3 363.0,226.0ZM361.1,236.0 366.2,233.4 370.7,232.5 368.8,234.5 363.4,236.8ZM368.8,231.3 374.7,229.0 376.4,230.7 372.6,231.3ZM331.6,209.1 327.4,201.9 329.9,197.3 332.7,203.7ZM289.4,163.3 300.1,160.5 305.4,163.3 291.5,168.7ZM274.5,147.3 283.0,139.4 288.3,146.8 280.9,150.4ZM341.0,160.3 347.0,156.5 352.4,157.6 355.6,156.0 357.2,148.4 355.6,141.9 359.9,135.5 363.1,128.0 380.4,128.0 380.4,133.3 373.9,141.9 371.8,150.6 377.2,153.8 384.7,156.0 393.4,161.4 399.8,167.8 402.0,176.5 395.5,178.6 391.2,172.1 389.0,165.7 380.4,163.5 371.8,162.4 370.7,172.1 373.9,180.8 370.7,189.0 355.6,189.0 341.6,182.9 337.3,174.3 338.3,165.7Z" fill="#d4dadc"/><path d="M355.6,146.3 361.0,145.2 366.4,150.6 367.5,157.0 363.1,159.2 357.8,158.1 354.5,153.8ZM382.0,128.0 380.4,133.3 374.0,142.0 372.0,150.5 377.0,153.8 385.0,156.0 393.4,161.4 399.8,165.0 402.0,162.0 400.0,158.0 404.0,160.0 407.0,156.0 404.0,150.0 408.0,147.0 406.0,140.0 410.0,136.0 408.0,128.0ZM371.0,131.0 375.0,131.5 376.0,135.0 372.0,136.0Z" fill="#fafaf8"/><path d="M187.4,194.8 183.8,197.3 178.5,200.5 172.1,202.6 166.7,203.7 161.4,204.4 156.1,205.4 149.7,205.1 145.4,203.0 139.0,200.5 131.5,194.8 127.3,192.2 M849.6,230.4 853.7,226.9 857.9,223.8 862.2,220.4 865.4,217.0 868.6,212.8 871.4,209.5 872.9,207.4 M869.2,345.8 872.9,349.0 877.1,351.1 881.4,353.9 884.6,356.5 M878.2,351.1 882.0,352.8 883.5,355.0 M894.8,363.7 895.9,367.5 897.8,370.4 900.0,375.3 M860.1,339.3 864.3,341.5 865.4,343.8" fill="none" stroke="#f4f5f4" stroke-width="1.1" stroke-dasharray="3 2.5"/><text x="314.0" y="215.1" textLength="39.3" lengthAdjust="spacingAndGlyphs" font-size="10.9" fill="#74838f" stroke="#74838f" stroke-width="0.25" font-family="Liberation Sans" font-weight="normal">NORTH</text><text x="307.9" y="227.9" textLength="51.9" lengthAdjust="spacingAndGlyphs" font-size="10.9" fill="#74838f" stroke="#74838f" stroke-width="0.25" font-family="Liberation Sans" font-weight="normal">AMERICA</text><text x="390.0" y="360.2" textLength="38.0" lengthAdjust="spacingAndGlyphs" font-size="10.9" fill="#74838f" stroke="#74838f" stroke-width="0.25" font-family="Liberation Sans" font-weight="normal">SOUTH</text><text x="382.9" y="373.2" textLength="52.1" lengthAdjust="spacingAndGlyphs" font-size="10.9" fill="#74838f" stroke="#74838f" stroke-width="0.25" font-family="Liberation Sans" font-weight="normal">AMERICA</text><text x="809.0" y="397.2" textLength="49.0" lengthAdjust="spacingAndGlyphs" font-size="10.9" fill="#74838f" stroke="#74838f" stroke-width="0.25" font-family="Liberation Sans" font-weight="normal">OCEANIA</text><text x="676.9" y="240.1" textLength="26.3" lengthAdjust="spacingAndGlyphs" font-size="10.9" fill="#74838f" stroke="#74838f" stroke-width="0.25" font-family="Liberation Sans" font-weight="normal">ASIA</text><text x="578.2" y="317.9" textLength="37.5" lengthAdjust="spacingAndGlyphs" font-size="9.4" fill="#74838f" stroke="#74838f" stroke-width="0.25" font-family="Liberation Sans" font-weight="normal">AFRICA</text><text x="433.0" y="302.9" textLength="51.0" lengthAdjust="spacingAndGlyphs" font-size="10.0" fill="#a6b0b8" font-family="Liberation Sans" font-style="italic">Atlantic</text><text x="439.0" y="314.2" textLength="37.0" lengthAdjust="spacingAndGlyphs" font-size="10.0" fill="#a6b0b8" font-family="Liberation Sans" font-style="italic">Ocean</text><text x="260.8" y="333.8" textLength="40.6" lengthAdjust="spacingAndGlyphs" font-size="10.0" fill="#a6b0b8" font-family="Liberation Sans" font-style="italic">Pacific</text><text x="262.0" y="344.9" textLength="38.0" lengthAdjust="spacingAndGlyphs" font-size="10.0" fill="#a6b0b8" font-family="Liberation Sans" font-style="italic">Ocean</text><text x="669.1" y="353.8" textLength="38.3" lengthAdjust="spacingAndGlyphs" font-size="10.0" fill="#a6b0b8" font-family="Liberation Sans" font-style="italic">Indian</text><text x="669.5" y="365.0" textLength="37.9" lengthAdjust="spacingAndGlyphs" font-size="10.0" fill="#a6b0b8" font-family="Liberation Sans" font-style="italic">Ocean</text><text x="703.7" y="493.8" textLength="54.3" lengthAdjust="spacingAndGlyphs" font-size="10.0" fill="#a6b0b8" font-family="Liberation Sans" font-style="italic">Southern</text><text x="712.0" y="504.7" textLength="38.0" lengthAdjust="spacingAndGlyphs" font-size="10.0" fill="#a6b0b8" font-family="Liberation Sans" font-style="italic">Ocean</text></g></defs>
 <use href="#world"/><use href="#world" x="-768"/><use href="#world" x="768"/>
 <g fill="rgba(75,0,130,0.2)" stroke="#ff0000" stroke-width="2.4"><circle cx="683.4" cy="256.9" r="10.8"/><circle cx="582.0" cy="237.5" r="7.8"/><circle cx="542.5" cy="271.7" r="10.3"/><circle cx="542.2" cy="233.6" r="8.3"/><circle cx="577.1" cy="358.1" r="4.9"/><circle cx="407.2" cy="297.1" r="3.3"/><circle cx="403.3" cy="422.9" r="12.3"/><circle cx="635.1" cy="240.6" r="10.8"/><circle cx="856.9" cy="415.0" r="4.3"/><circle cx="861.6" cy="410.9" r="8.8"/><circle cx="818.1" cy="360.8" r="2.6"/><circle cx="865.5" cy="395.0" r="5.6"/><circle cx="834.7" cy="413.6" r="6.8"/><circle cx="853.3" cy="435.5" r="6.4"/><circle cx="848.3" cy="421.3" r="8.4"/><circle cx="786.2" cy="406.0" r="5.8"/><circle cx="570.0" cy="218.5" r="10.8"/><circle cx="640.5" cy="240.3" r="10.8"/><circle cx="373.9" cy="278.8" r="3.7"/><circle cx="647.0" cy="276.7" r="9.8"/><circle cx="731.8" cy="282.0" r="10.9"/><circle cx="412.0" cy="305.6" r="4.3"/><circle cx="598.6" cy="197.6" r="13.8"/><circle cx="548.5" cy="208.8" r="13.8"/><circle cx="350.2" cy="296.8" r="3.3"/><circle cx="543.9" cy="314.1" r="4.8"/><circle cx="731.9" cy="272.9" r="3.3"/><circle cx="403.3" cy="369.2" r="10.0"/><circle cx="576.7" cy="229.5" r="8.8"/><circle cx="591.7" cy="382.9" r="5.6"/><circle cx="428.2" cy="364.7" r="14.1"/><circle cx="783.8" cy="324.3" r="3.1"/><circle cx="593.4" cy="233.0" r="9.3"/><circle cx="535.7" cy="307.7" r="5.3"/><circle cx="602.8" cy="341.2" r="4.8"/><circle cx="489.8" cy="298.2" r="7.3"/><circle cx="763.0" cy="307.0" r="4.1"/><circle cx="565.4" cy="318.2" r="7.8"/><circle cx="290.3" cy="196.8" r="14.2"/><circle cx="266.7" cy="197.6" r="12.7"/><circle cx="328.2" cy="197.5" r="7.5"/><circle cx="397.2" cy="221.5" r="6.9"/><circle cx="416.0" cy="199.7" r="8.0"/><circle cx="403.0" cy="227.2" r="7.5"/><circle cx="357.0" cy="206.2" r="14.6"/><circle cx="403.7" cy="221.6" r="4.6"/><circle cx="382.1" cy="200.4" r="14.2"/><circle cx="311.9" cy="200.4" r="8.8"/><circle cx="272.7" cy="150.7" r="2.7"/><circle cx="251.0" cy="153.4" r="4.0"/><circle cx="583.7" cy="319.9" r="7.8"/><circle cx="579.0" cy="300.6" r="5.8"/><circle cx="386.4" cy="415.6" r="13.2"/><circle cx="789.1" cy="262.3" r="5.7"/><circle cx="787.4" cy="240.2" r="7.3"/><circle cx="769.1" cy="266.7" r="5.1"/><circle cx="790.7" cy="276.3" r="5.7"/><circle cx="761.5" cy="252.2" r="4.4"/><circle cx="781.0" cy="282.8" r="6.3"/><circle cx="771.1" cy="281.6" r="4.5"/><circle cx="767.0" cy="274.6" r="4.5"/><circle cx="773.1" cy="292.3" r="3.8"/><circle cx="786.7" cy="242.0" r="5.3"/><circle cx="811.6" cy="217.4" r="8.2"/><circle cx="781.4" cy="257.1" r="6.3"/><circle cx="782.6" cy="285.2" r="4.3"/><circle cx="778.5" cy="264.4" r="6.4"/><circle cx="777.3" cy="272.7" r="5.7"/><circle cx="782.1" cy="229.0" r="5.7"/><circle cx="793.8" cy="259.4" r="6.4"/><circle cx="785.9" cy="272.7" r="5.1"/><circle cx="808.2" cy="230.2" r="6.3"/><circle cx="800.6" cy="237.1" r="6.3"/><circle cx="781.2" cy="285.5" r="2.3"/><circle cx="765.5" cy="248.2" r="3.8"/><circle cx="743.8" cy="252.3" r="2.4"/><circle cx="771.3" cy="253.7" r="5.1"/><circle cx="791.1" cy="250.7" r="6.4"/><circle cx="798.1" cy="263.9" r="5.7"/><circle cx="778.6" cy="247.4" r="5.7"/><circle cx="758.1" cy="265.3" r="5.3"/><circle cx="789.3" cy="242.7" r="5.3"/><circle cx="726.9" cy="262.7" r="0.8"/><circle cx="720.8" cy="237.6" r="3.7"/><circle cx="755.5" cy="279.0" r="4.1"/><circle cx="795.2" cy="268.9" r="6.4"/><circle cx="380.5" cy="324.2" r="10.5"/><circle cx="572.8" cy="334.5" r="6.1"/><circle cx="585.4" cy="342.6" r="8.2"/><circle cx="360.3" cy="313.1" r="6.8"/><circle cx="527.2" cy="317.9" r="8.2"/><circle cx="571.4" cy="226.0" r="8.8"/><circle cx="539.0" cy="334.0" r="5.3"/><circle cx="373.1" cy="287.0" r="6.9"/><circle cx="610.3" cy="253.9" r="6.8"/><circle cx="572.0" cy="211.1" r="10.8"/><circle cx="524.3" cy="164.7" r="10.1"/><circle cx="448.1" cy="110.8" r="4.8"/><circle cx="559.3" cy="188.1" r="13.8"/><circle cx="629.9" cy="308.6" r="6.0"/><circle cx="408.1" cy="300.7" r="3.3"/><circle cx="389.3" cy="293.3" r="8.5"/><circle cx="372.2" cy="337.9" r="9.6"/><circle cx="604.7" cy="274.6" r="11.4"/><circle cx="349.4" cy="304.3" r="7.3"/><circle cx="560.9" cy="330.5" r="7.4"/><circle cx="623.9" cy="301.2" r="4.6"/><circle cx="592.4" cy="178.9" r="12.3"/><circle cx="606.1" cy="392.7" r="6.6"/><circle cx="625.4" cy="314.4" r="7.8"/><circle cx="918.9" cy="372.4" r="2.6"/><circle cx="593.9" cy="164.6" r="15.8"/><circle cx="425.7" cy="325.6" r="6.0"/><circle cx="857.7" cy="372.3" r="3.8"/><circle cx="407.6" cy="298.9" r="4.3"/><circle cx="635.4" cy="361.6" r="5.3"/><circle cx="892.3" cy="379.6" r="2.6"/><circle cx="657.5" cy="380.1" r="6.1"/><circle cx="405.0" cy="295.2" r="2.3"/><circle cx="404.5" cy="294.8" r="3.3"/><circle cx="408.8" cy="302.4" r="4.3"/><circle cx="543.7" cy="222.5" r="15.8"/><circle cx="563.8" cy="335.7" r="6.0"/><circle cx="506.3" cy="305.1" r="4.6"/><circle cx="631.5" cy="234.2" r="6.7"/><circle cx="561.3" cy="206.5" r="15.8"/><circle cx="536.8" cy="317.0" r="7.3"/><circle cx="585.6" cy="243.3" r="8.8"/><circle cx="407.4" cy="308.0" r="2.8"/><circle cx="346.5" cy="299.9" r="8.8"/><circle cx="518.3" cy="312.7" r="6.3"/><circle cx="506.6" cy="308.6" r="5.3"/><circle cx="413.3" cy="323.6" r="4.2"/><circle cx="384.8" cy="292.8" r="5.8"/><circle cx="565.6" cy="235.4" r="3.8"/><circle cx="355.0" cy="301.2" r="8.3"/><circle cx="580.6" cy="219.6" r="9.3"/><circle cx="498.4" cy="150.1" r="15.9"/><circle cx="707.5" cy="289.1" r="12.8"/><circle cx="782.0" cy="335.7" r="10.1"/><circle cx="653.5" cy="260.8" r="12.3"/><circle cx="632.2" cy="258.8" r="10.8"/><circle cx="522.6" cy="199.7" r="15.3"/><circle cx="613.4" cy="264.3" r="10.8"/><circle cx="565.8" cy="235.5" r="14.8"/><circle cx="374.1" cy="294.7" r="5.5"/><circle cx="833.9" cy="251.0" r="10.8"/><circle cx="616.3" cy="265.4" r="7.8"/><circle cx="681.8" cy="216.9" r="15.3"/><circle cx="619.9" cy="334.1" r="7.7"/><circle cx="811.6" cy="251.8" r="10.1"/><circle cx="640.3" cy="268.5" r="10.3"/><circle cx="698.5" cy="237.4" r="10.8"/><circle cx="757.7" cy="290.8" r="1.2"/><circle cx="591.5" cy="185.8" r="10.8"/><circle cx="615.5" cy="257.2" r="6.8"/><circle cx="518.9" cy="320.3" r="5.3"/><circle cx="575.8" cy="275.7" r="6.7"/><circle cx="559.4" cy="219.7" r="6.8"/><circle cx="589.9" cy="192.3" r="10.8"/><circle cx="552.1" cy="211.1" r="8.8"/><circle cx="639.0" cy="374.8" r="6.9"/><circle cx="756.5" cy="325.0" r="8.3"/><circle cx="695.2" cy="327.2" r="6.1"/><circle cx="530.5" cy="295.9" r="6.0"/><circle cx="569.7" cy="251.7" r="6.4"/><circle cx="515.7" cy="288.1" r="6.7"/><circle cx="661.8" cy="378.4" r="4.9"/><circle cx="320.2" cy="282.1" r="12.2"/><circle cx="599.5" cy="218.8" r="10.3"/><circle cx="554.8" cy="230.0" r="6.8"/><circle cx="760.5" cy="220.6" r="7.2"/><circle cx="580.3" cy="233.0" r="6.8"/><circle cx="523.9" cy="262.4" r="9.8"/><circle cx="614.8" cy="374.5" r="6.9"/><circle cx="578.4" cy="384.3" r="6.1"/><circle cx="718.5" cy="270.8" r="8.5"/><circle cx="389.7" cy="307.1" r="4.2"/><circle cx="391.8" cy="307.8" r="2.4"/><circle cx="404.5" cy="294.9" r="3.3"/><circle cx="393.4" cy="307.8" r="1.5"/><circle cx="550.3" cy="203.2" r="13.8"/><circle cx="912.1" cy="429.8" r="8.1"/><circle cx="357.2" cy="306.3" r="6.3"/><circle cx="556.2" cy="295.8" r="6.0"/><circle cx="557.5" cy="314.5" r="8.8"/><circle cx="585.4" cy="236.2" r="7.8"/><circle cx="557.1" cy="171.0" r="16.4"/><circle cx="658.3" cy="287.0" r="10.8"/><circle cx="686.9" cy="265.9" r="13.3"/><circle cx="366.7" cy="315.7" r="8.3"/><circle cx="846.1" cy="347.5" r="2.1"/><circle cx="414.3" cy="385.5" r="7.8"/><circle cx="379.0" cy="353.7" r="11.4"/><circle cx="798.8" cy="306.3" r="10.6"/><circle cx="579.8" cy="204.0" r="11.8"/><circle cx="521.5" cy="242.4" r="12.5"/><circle cx="648.2" cy="278.1" r="10.8"/><circle cx="592.3" cy="223.4" r="12.3"/><circle cx="763.7" cy="164.0" r="26.8"/><circle cx="602.7" cy="338.1" r="5.6"/><circle cx="405.1" cy="296.4" r="2.8"/><circle cx="408.9" cy="304.0" r="3.3"/><circle cx="408.3" cy="306.1" r="2.3"/><circle cx="565.6" cy="229.4" r="7.8"/><circle cx="635.2" cy="281.5" r="11.3"/><circle cx="508.2" cy="302.7" r="7.4"/><circle cx="583.8" cy="229.2" r="9.8"/><circle cx="657.4" cy="344.0" r="3.3"/><circle cx="760.5" cy="331.1" r="9.3"/><circle cx="581.0" cy="214.8" r="8.8"/><circle cx="571.0" cy="222.8" r="8.3"/><circle cx="637.6" cy="323.0" r="7.7"/><circle cx="587.9" cy="402.5" r="12.6"/><circle cx="531.0" cy="239.5" r="15.8"/><circle cx="711.3" cy="317.2" r="6.1"/><circle cx="603.5" cy="306.3" r="8.2"/><circle cx="419.5" cy="325.6" r="4.6"/><circle cx="578.8" cy="172.5" r="20.3"/><circle cx="556.6" cy="220.7" r="13.3"/><circle cx="622.2" cy="254.7" r="5.8"/><circle cx="797.1" cy="281.9" r="5.7"/><circle cx="613.4" cy="347.6" r="5.3"/><circle cx="754.5" cy="299.7" r="7.7"/><circle cx="807.2" cy="353.0" r="2.6"/><circle cx="540.8" cy="315.5" r="4.6"/><circle cx="408.4" cy="311.1" r="4.3"/><circle cx="559.3" cy="257.1" r="7.0"/><circle cx="614.2" cy="243.6" r="13.8"/><circle cx="325.7" cy="240.7" r="18.2"/><circle cx="607.9" cy="331.1" r="5.3"/><circle cx="605.5" cy="215.8" r="12.8"/><circle cx="653.9" cy="282.6" r="11.0"/><circle cx="400.9" cy="261.1" r="5.8"/><circle cx="365.7" cy="292.0" r="4.5"/><circle cx="534.0" cy="212.5" r="9.6"/><circle cx="527.6" cy="251.2" r="6.3"/><circle cx="529.3" cy="195.7" r="7.6"/><circle cx="406.3" cy="297.8" r="2.8"/><circle cx="404.5" cy="294.5" r="2.3"/><circle cx="401.1" cy="294.0" r="2.8"/><circle cx="385.8" cy="286.6" r="3.3"/><circle cx="412.0" cy="463.6" r="2.8"/><circle cx="531.7" cy="191.5" r="20.4"/><circle cx="420.0" cy="407.4" r="6.4"/><circle cx="676.8" cy="236.9" r="10.3"/><circle cx="396.9" cy="320.3" r="8.2"/><circle cx="770.0" cy="303.7" r="4.5"/><circle cx="598.4" cy="362.3" r="6.9"/><circle cx="601.2" cy="375.3" r="6.1"/><circle cx="418.9" cy="220.5" r="1.5"/><circle cx="614.2" cy="262.0" r="6.8"/><circle cx="583.6" cy="233.4" r="7.3"/><circle cx="743.7" cy="286.1" r="4.1"/><circle cx="539.0" cy="334.0" r="1.4"/><circle cx="513.9" cy="315.9" r="5.3"/><circle cx="612.2" cy="362.5" r="5.3"/><circle cx="605.8" cy="319.3" r="6.1"/><circle cx="511.5" cy="280.7" r="1.4"/><circle cx="553.1" cy="333.6" r="4.6"/><circle cx="642.5" cy="300.4" r="6.0"/><circle cx="631.4" cy="359.0" r="4.5"/><circle cx="691.1" cy="243.9" r="8.8"/><circle cx="599.2" cy="400.2" r="5.3"/></g>
</svg>
</div>
<div id="rstrip" class="abs"></div>
<div id="rline" class="abs"></div>
<div class="abs" style="left:1001px;top:129px;width:1px;height:427px;background:#e6e6e6"></div>
<div id="thumb" class="abs"></div>
<svg class="abs" style="left:0;top:0;pointer-events:none" width="1024" height="556" font-family="Liberation Sans"><defs><linearGradient id="fade" x1="0" x2="1"><stop offset="0.82" stop-color="#3c3c3c"/><stop offset="1" stop-color="#cfcfcf"/></linearGradient></defs><text x="33.2" y="15.0" textLength="130.5" lengthAdjust="spacingAndGlyphs" font-size="9.17" fill="url(#fade)" font-weight="normal" >COVID19_Dashboard.ipynb - Co</text><text x="107.0" y="42.1" textLength="133.6" lengthAdjust="spacingAndGlyphs" font-size="11.11" fill="#202124" font-weight="normal" >colab.research.google.com</text><text x="240.8" y="42.1" textLength="231.4" lengthAdjust="spacingAndGlyphs" font-size="11.11" fill="#6b6b6b" font-weight="normal" >/drive/1Tzyx9ChxyweSRnIZD1qBVh5_aC6tPNfk</text><text x="72.9" y="73.8" textLength="164.1" lengthAdjust="spacingAndGlyphs" font-size="14.03" fill="#e8eaed" font-weight="normal" >COVID19_Dashboard.ipynb</text><text x="53.8" y="92.9" textLength="15.5" lengthAdjust="spacingAndGlyphs" font-size="11.39" fill="#d8d8d8" font-weight="normal" >File</text><text x="80.7" y="92.9" textLength="17.0" lengthAdjust="spacingAndGlyphs" font-size="11.39" fill="#d8d8d8" font-weight="normal" >Edit</text><text x="108.6" y="92.9" textLength="22.5" lengthAdjust="spacingAndGlyphs" font-size="11.39" fill="#d8d8d8" font-weight="normal" >View</text><text x="141.7" y="92.9" textLength="26.8" lengthAdjust="spacingAndGlyphs" font-size="11.39" fill="#d8d8d8" font-weight="normal" >Insert</text><text x="179.4" y="92.9" textLength="37.8" lengthAdjust="spacingAndGlyphs" font-size="11.39" fill="#d8d8d8" font-weight="normal" >Runtime</text><text x="229.0" y="92.9" textLength="24.6" lengthAdjust="spacingAndGlyphs" font-size="11.39" fill="#d8d8d8" font-weight="normal" >Tools</text><text x="264.9" y="92.9" textLength="20.9" lengthAdjust="spacingAndGlyphs" font-size="11.39" fill="#d8d8d8" font-weight="normal" >Help</text><text x="297.3" y="92.9" textLength="84.0" lengthAdjust="spacingAndGlyphs" font-size="11.39" fill="#a0a0a0" font-weight="normal" text-decoration="underline">All changes saved</text><rect x="297.3" y="94.2" width="84" height="0.9" fill="#8a8a8a"/><text x="823.6" y="81.1" textLength="46.2" lengthAdjust="spacingAndGlyphs" font-size="11.25" fill="#dcdcdc" font-weight="normal" >Comment</text><text x="911.8" y="81.1" textLength="26.6" lengthAdjust="spacingAndGlyphs" font-size="11.25" fill="#dcdcdc" font-weight="normal" >Share</text><text x="43.4" y="118.6" textLength="7.2" lengthAdjust="spacingAndGlyphs" font-size="10.56" fill="#dcdcdc" font-weight="normal" >+</text><text x="55.1" y="118.6" textLength="24.5" lengthAdjust="spacingAndGlyphs" font-size="11.25" fill="#dcdcdc" font-weight="normal" >Code</text><text x="93.3" y="118.6" textLength="7.2" lengthAdjust="spacingAndGlyphs" font-size="10.56" fill="#dcdcdc" font-weight="normal" >+</text><text x="106.2" y="118.6" textLength="19.3" lengthAdjust="spacingAndGlyphs" font-size="11.25" fill="#dcdcdc" font-weight="normal" >Text</text><text x="822.9" y="113.5" textLength="19.5" lengthAdjust="spacingAndGlyphs" font-size="10.00" fill="#e0e0e0" font-weight="normal" >RAM</text><text x="824.8" y="123.5" textLength="17.6" lengthAdjust="spacingAndGlyphs" font-size="10.00" fill="#e0e0e0" font-weight="normal" >Disk</text><text x="938.9" y="119.0" textLength="31.7" lengthAdjust="spacingAndGlyphs" font-size="11.25" fill="#a8a8a8" font-weight="normal" >Editing</text></svg>
</body></html>
